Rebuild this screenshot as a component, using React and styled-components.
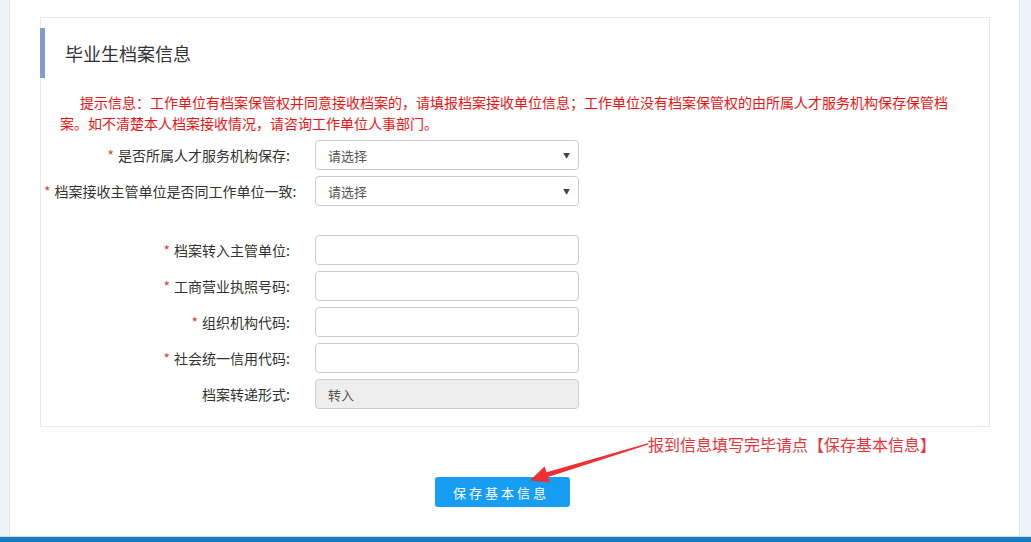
import styled, { createGlobalStyle } from 'styled-components'

const GlobalStyle = createGlobalStyle`
  html, body {
    margin: 0;
    padding: 0;
    background: #fff;
  }
  body {
    font-family: "Noto Sans CJK SC", "Liberation Sans", sans-serif;
    color: #333;
  }
`

let Page = styled.div`
  position: relative;
  width: 1031px;
  height: 542px;
  display: flex;
  flex-direction: column;
  overflow: hidden;
`

let Body = styled.div`
  flex: 1;
  display: flex;
  min-height: 0;
`

let SideStrip = styled.div`
  width: ${p => p.$w}px;
  background: #eef3f7;
  border-${p => p.$side}: 1px solid #dce3e9;
`

let Main = styled.div`
  flex: 1;
  background: #fff;
  padding: 17px 29px 0 30px;
  display: flex;
  flex-direction: column;
`

let Card = styled.div`
  border: 1px solid #e6eaee;
  padding: 10px 0 17px 0;
`

let Title = styled.h3`
  margin: 0 0 14px -1px;
  height: 50px;
  border-left: 5px solid #7f9dcc;
  padding-left: 20px;
  display: flex;
  align-items: center;
  font-size: 18px;
  font-weight: normal;
  color: #333;
`

let Hint = styled.p`
  margin: 0 35px 6px 19px;
  text-indent: 20px;
  font-size: 14px;
  line-height: 21px;
  color: #ee1111;
`

let Form = styled.div`
  display: flex;
  flex-direction: column;
  gap: 6px;
`

let Row = styled.div`
  display: flex;
  align-items: center;
  margin-top: ${p => p.$gap || 0}px;
`

let Label = styled.label`
  width: 246px;
  margin-left: 3px;
  margin-right: 25px;
  text-align: right;
  white-space: nowrap;
  font-size: 14px;
  color: #333;
`

let Star = styled.span`
  color: #e4393c;
  margin-right: 4px;
`

let Field = styled.div`
  position: relative;
  width: 264px;
  height: 30px;
  box-sizing: border-box;
  border: 1px solid #ccc;
  border-radius: 4px;
  background: ${p => (p.$disabled ? '#eeeeee' : '#fff')};
  display: flex;
  align-items: center;
  padding: 0 12px;
  font-size: 13px;
  color: #555;
`

let Caret = styled.span`
  margin-left: auto;
  font-size: 7px;
  color: #444;
  margin-right: -4px;
`

let Footer = styled.div`
  flex: 1;
  display: flex;
  align-items: flex-start;
  padding: 50px 0 0 395px;
`

let SaveButton = styled.button`
  width: 135px;
  height: 30px;
  border: none;
  border-radius: 3px;
  background: #179df1;
  color: #fff;
  font-family: inherit;
  font-size: 13px;
  letter-spacing: 3px;
  padding-left: 3px;
`

let BottomBar = styled.div`
  height: 5px;
  background: #1a7bc0;
  border-top: 1px solid #cfe0ec;
`

let Note = styled.div`
  position: absolute;
  left: 648px;
  top: 432px;
  font-size: 16px;
  color: #e8333a;
  white-space: nowrap;
`

let Arrow = styled.svg`
  position: absolute;
  left: 0;
  top: 0;
  pointer-events: none;
`

const rows = [
  { label: '档案转入主管单位:', required: true },
  { label: '工商营业执照号码:', required: true },
  { label: '组织机构代码:', required: true },
  { label: '社会统一信用代码:', required: true },
  { label: '档案转递形式:', value: '转入', disabled: true },
]

function FormRow({ label, required, children, gap }) {
  return (
    <Row $gap={gap}>
      <Label>
        {required && <Star>*</Star>}
        {label}
      </Label>
      {children}
    </Row>
  )
}

export default function App() {
  return (
    <>
      <GlobalStyle />
      <Page>
        <Body>
          <SideStrip $w={9} $side="right" />
          <Main>
            <Card>
              <Title>毕业生档案信息</Title>
              <Hint>
                提示信息：工作单位有档案保管权并同意接收档案的，请填报档案接收单位信息；工作单位没有档案保管权的由所属人才服务机构保存保管档案。如不清楚本人档案接收情况，请咨询工作单位人事部门。
              </Hint>
              <Form>
                <FormRow label="是否所属人才服务机构保存:" required>
                  <Field>请选择<Caret>▼</Caret></Field>
                </FormRow>
                <FormRow label="档案接收主管单位是否同工作单位一致:" required>
                  <Field>请选择<Caret>▼</Caret></Field>
                </FormRow>
                {rows.map((r, i) => (
                  <FormRow key={r.label} label={r.label} required={r.required} gap={i === 0 ? 23 : 0}>
                    <Field $disabled={r.disabled}>{r.value}</Field>
                  </FormRow>
                ))}
              </Form>
            </Card>
            <Footer>
              <SaveButton>保存基本信息</SaveButton>
            </Footer>
          </Main>
          <SideStrip $w={11} $side="left" />
        </Body>
        <BottomBar />
        <Note>报到信息填写完毕请点【保存基本信息】</Note>
        <Arrow width="1031" height="542" viewBox="0 0 1031 542">
          <polygon
            points="648,443.3 546.6,472.3 544.5,466.5 530,480.5 550,482.6 548,477.1 648.4,444.6"
            fill="#ee2f36"
          />
        </Arrow>
      </Page>
    </>
  )
}
